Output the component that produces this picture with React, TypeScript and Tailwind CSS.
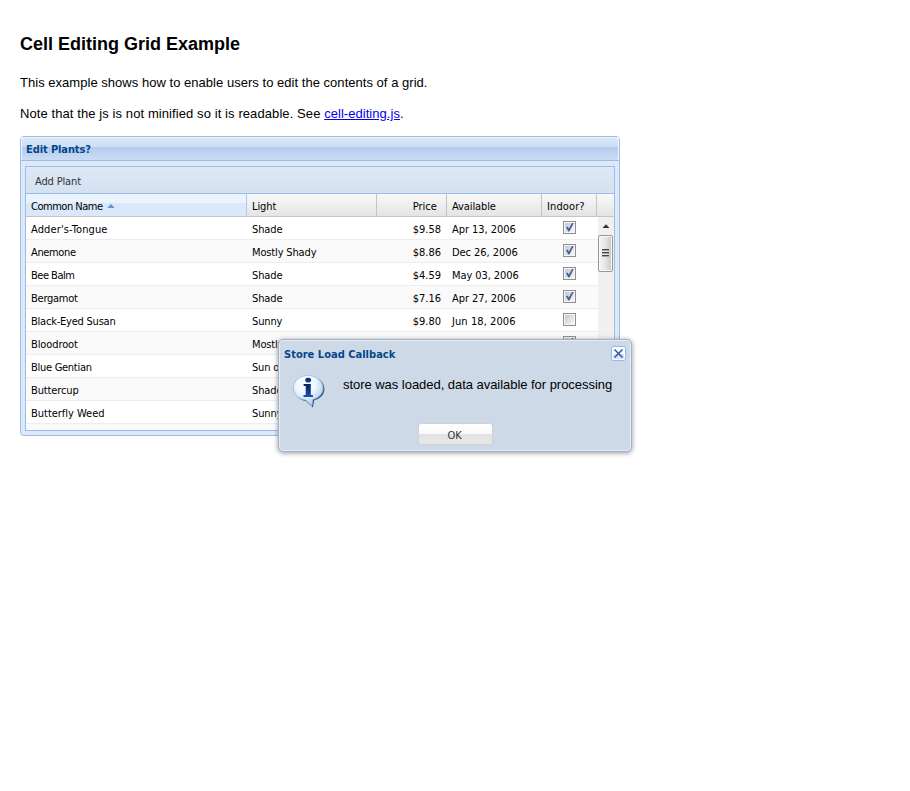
import React from 'react';

const tahoma = "font-['DejaVu_Sans_Condensed','DejaVu_Sans',sans-serif]";
const arial = "font-['Liberation_Sans',Arial,sans-serif]";

type Plant = {
  name: string;
  nameFit: string;
  light: string;
  lightFit: string;
  price: string;
  date: string;
  dateFit: string;
  indoor: boolean;
};

const plants: Plant[] = [
  { name: "Adder's-Tongue", nameFit: 'tracking-[0.12px]', light: 'Shade', lightFit: 'tracking-[-0.1px]', price: '$9.58', date: 'Apr 13, 2006', dateFit: 'tracking-[-0.05px]', indoor: true },
  { name: 'Anemone', nameFit: 'tracking-[-0.35px]', light: 'Mostly Shady', lightFit: 'tracking-[-0.15px]', price: '$8.86', date: 'Dec 26, 2006', dateFit: 'tracking-[-0.05px]', indoor: true },
  { name: 'Bee Balm', nameFit: 'tracking-[-0.5px]', light: 'Shade', lightFit: 'tracking-[-0.1px]', price: '$4.59', date: 'May 03, 2006', dateFit: 'tracking-[-0.08px]', indoor: true },
  { name: 'Bergamot', nameFit: 'tracking-[-0.25px]', light: 'Shade', lightFit: 'tracking-[-0.1px]', price: '$7.16', date: 'Apr 27, 2006', dateFit: 'tracking-[-0.05px]', indoor: true },
  { name: 'Black-Eyed Susan', nameFit: 'tracking-[-0.22px]', light: 'Sunny', lightFit: 'tracking-[-0.15px]', price: '$9.80', date: 'Jun 18, 2006', dateFit: 'tracking-[0.08px]', indoor: false },
  { name: 'Bloodroot', nameFit: 'tracking-[-0.1px]', light: 'Mostly Shady', lightFit: 'tracking-[-0.15px]', price: '$2.44', date: 'Mar 15, 2006', dateFit: 'tracking-[-0.1px]', indoor: true },
  { name: 'Blue Gentian', nameFit: 'tracking-[-0.28px]', light: 'Sun or Shade', lightFit: 'tracking-[-0.2px]', price: '$8.56', date: 'May 02, 2006', dateFit: 'tracking-[-0.1px]', indoor: false },
  { name: 'Buttercup', nameFit: 'tracking-[-0.12px]', light: 'Shade', lightFit: 'tracking-[-0.1px]', price: '$2.57', date: 'Jun 10, 2006', dateFit: 'tracking-[-0.1px]', indoor: true },
  { name: 'Butterfly Weed', nameFit: 'tracking-[-0.02px]', light: 'Sunny', lightFit: 'tracking-[-0.15px]', price: '$2.78', date: 'Jun 30, 2006', dateFit: 'tracking-[-0.1px]', indoor: false },
];

function Check({ on }: { on: boolean }) {
  return (
    <svg width="13" height="13" viewBox="0 0 13 13" className="mt-1 block">
      <defs>
        <linearGradient id="box" x1="0" y1="0" x2="1" y2="1">
          <stop offset="0" stopColor="#c4c8cf" />
          <stop offset="1" stopColor="#f7f7f7" />
        </linearGradient>
      </defs>
      <rect x=".5" y=".5" width="12" height="12" fill="#f6f6f6" stroke="#8e8f8f" />
      <rect x="2" y="2" width="9" height="9" fill="url(#box)" />
      {on && <path d="M3 6.2 L4.6 5.4 L5.8 7.6 L9 1.9 L10.7 1.9 L6.4 10.4 L5.3 10.4 Z" fill="#45609f" />}
    </svg>
  );
}

function InfoIcon() {
  return (
    <svg width="34" height="34" viewBox="0 0 34 34" className="block">
      <defs>
        <radialGradient id="bubble" cx=".42" cy=".3" r=".75">
          <stop offset="0" stopColor="#ffffff" />
          <stop offset=".45" stopColor="#eef6fe" />
          <stop offset="1" stopColor="#9cc4ee" />
        </radialGradient>
        <linearGradient id="letter" x1="0" y1="0" x2="0" y2="1">
          <stop offset="0" stopColor="#0b1f5c" />
          <stop offset="1" stopColor="#1b50ab" />
        </linearGradient>
      </defs>
      <path d="M17 2.2 C25.8 2.2 32.4 7.8 32.4 14.9 C32.4 20.4 28.8 24.3 22.3 26.2 L20.9 33.4 L13.8 27 C7 25.8 2.4 21.2 2.4 15 C2.4 7.8 8.6 2.2 17 2.2 Z" fill="#344f80" />
      <path d="M16 1.5 C24.4 1.5 31 7 31 14 C31 19.6 27 23.8 20.9 25.4 L19.8 31.8 L13.6 26 C6.6 25.2 1.3 20.6 1.3 14 C1.3 7 7.7 1.5 16 1.5 Z" fill="url(#bubble)" stroke="#a3b9d8" strokeWidth=".8" />
      <ellipse cx="16.2" cy="6.2" rx="2.9" ry="2.4" fill="url(#letter)" />
      <path d="M11.6 10 H18.8 V21 H20.9 V22.9 H11.5 V21 H13.7 V11.9 H11.6 Z" fill="url(#letter)" />
    </svg>
  );
}

function Scrollbar() {
  return (
    <div className="flex h-[214px] w-4 shrink-0 flex-col items-center bg-[#f0f0f0]">
      <svg width="16" height="18" viewBox="0 0 16 18" className="block">
        <path d="M4.5 11 L8 7.3 L11.5 11 Z" fill="#333" />
      </svg>
      <div className="mr-px flex h-[37px] w-[15px] flex-col items-center gap-px rounded-[2px] border border-[#979797] bg-linear-to-r from-[#f5f5f5] via-[#e5e5e6] to-[#c4c5c8] pt-[13px] pr-px shadow-[inset_0_0_0_1px_#f8f8f8]">
        <div className="h-[2px] w-[7px] border-t border-[#444] bg-[#a5a5a5]" />
        <div className="h-[2px] w-[7px] border-t border-[#444] bg-[#a5a5a5]" />
        <div className="h-[2px] w-[7px] border-t border-[#444] bg-[#a5a5a5]" />
      </div>
    </div>
  );
}

function MessageBox() {
  return (
    <div className="absolute top-[339px] left-[278px] h-[113px] w-[354px] rounded-[5px] border border-[#a2b1c5] bg-[#ced9e7] shadow-[inset_0_0_0_1px_#e5edf7,0px_1px_5px_0px_rgba(90,90,90,0.65)]">
      <div className={`flex h-[27px] items-center justify-between pr-[5px] pl-[5px] text-[11px] font-bold text-[#04468c] ${tahoma}`}>
        <span className="pt-[4px] whitespace-nowrap tracking-[0.02px]">Store Load Callback</span>
        <svg width="15" height="15" viewBox="0 0 15 15" className="block">
          <rect x=".5" y=".5" width="14" height="14" rx="2" fill="#f8fbff" stroke="#94b9ea" />
          <rect x="2" y="8" width="11" height="5" fill="#d3e3f8" />
          <path d="M3.5 3.5 L11.5 11.5 M11.5 3.5 L3.5 11.5" stroke="#31519c" strokeWidth="1.5" />
        </svg>
      </div>
      <div className="flex pt-[7px] pl-[13px]">
        <InfoIcon />
        <p className={`mt-[3px] ml-[17px] text-[13px] leading-[15px] whitespace-nowrap text-black tracking-[-0.04px] ${arial}`}>store was loaded, data available for processing</p>
      </div>
      <div className="flex justify-center pt-[15px]">
        <button className={`flex h-[22px] w-[75px] items-center justify-center rounded-[3px] border border-[#d1d1d1] bg-[linear-gradient(#fff_0%,#f9f9f9_48%,#e2e2e2_52%,#e7e7e7_100%)] pt-[4px] pr-px text-[11px] leading-[16px] tracking-[-0.1px] text-[#333] ${tahoma}`}>OK</button>
      </div>
    </div>
  );
}

export default function App() {
  return (
    <div className={`relative h-[791px] w-[910px] overflow-hidden bg-white pt-[33px] pl-5 text-black ${arial}`}>
      <h1 className="h-[22px] text-[18px] leading-[22px] font-bold">Cell Editing Grid Example</h1>
      <p className="mt-5 h-[15px] text-[13px] leading-[15px] tracking-[0.03px]">This example shows how to enable users to edit the contents of a grid.</p>
      <p className="mt-4 h-[15px] text-[13px] leading-[15px] tracking-[0.09px]">
        Note that the js is not minified so it is readable. See <a className="tracking-[0.04px] text-[#0000ee] underline" href="#">cell-editing.js</a>.
      </p>

      <div className={`mt-[15px] h-[300px] w-[600px] rounded-[4px] border border-[#99bce8] bg-[#dfe8f6] text-[11px] ${tahoma}`}>
        <div className="h-6 rounded-t-[3px] border-b border-[#99bce8] bg-[linear-gradient(#dae7f6_0%,#cddef3_45%,#abc7ec_46%,#b8cfee_55%,#cbddf3_100%)] pl-[5px] leading-[25px] font-bold tracking-[-0.1px] text-[#04468c] shadow-[inset_0_1px_0_#f4f8fd,inset_1px_0_0_#f0f6fd,inset_-1px_0_0_#f0f6fd]">
          Edit Plants?
        </div>
        <div className="mx-1 mt-[5px] h-[265px] w-[590px] overflow-hidden border border-[#99bce8] bg-white">
          <div className="h-[27px] border-b border-[#99bce8] bg-linear-to-b from-[#dfe9f5] to-[#d3e1f1] pl-[9px] leading-[30px] tracking-[-0.15px] text-[#333]">Add Plant</div>
          <div className="flex h-[23px] border-b border-[#c5c5c5] bg-linear-to-b from-[#f9f9f9] to-[#e3e4e6] leading-[26px]">
            <div className="flex h-[22px] w-[221px] border-r border-[#aaccf6] bg-[linear-gradient(#ebf3fd_0%,#ebf3fd_39%,#d9e8fb_40%,#d9e8fb_100%)] pl-[5px]">
              <span className="tracking-[-0.48px]">Common Name</span>
              <svg width="8" height="4" viewBox="0 0 8 4" className="mt-[10px] ml-1"><path d="M.3 4 L4 0 L7.7 4 Z" fill="#6593cf" /></svg>
            </div>
            <div className="h-[22px] w-[130px] border-r border-[#c5c5c5] pl-[5px] tracking-[-0.1px]">Light</div>
            <div className="h-[22px] w-[70px] border-r border-[#c5c5c5] pr-[9px] text-right tracking-[0.05px]">Price</div>
            <div className="h-[22px] w-[95px] border-r border-[#c5c5c5] pl-[5px] tracking-[-0.1px]">Available</div>
            <div className="h-[22px] w-[55px] border-r border-[#c5c5c5] pl-[5px] tracking-[0.12px]">Indoor?</div>
          </div>
          <div className="flex">
            <div className="w-[572px]">
              {plants.map((p, i) => (
                <div key={p.name} className={`flex h-[23px] border-b border-[#ededed] leading-[26px] whitespace-nowrap ${i % 2 ? 'bg-[#fafafa]' : 'bg-white'}`}>
                  <div className={`h-[22px] w-[221px] pl-[5px] ${p.nameFit}`}>{p.name}</div>
                  <div className={`h-[22px] w-[130px] pl-[5px] ${p.lightFit}`}>{p.light}</div>
                  <div className="h-[22px] w-[70px] pr-[6px] text-right">{p.price}</div>
                  <div className={`h-[22px] w-[95px] pl-[5px] ${p.dateFit}`}>{p.date}</div>
                  <div className="flex h-[22px] w-[55px] justify-center"><Check on={p.indoor} /></div>
                </div>
              ))}
              <div className="h-[10px] bg-[#fafafa]" />
            </div>
            <Scrollbar />
          </div>
        </div>
      </div>
      <MessageBox />
    </div>
  );
}
